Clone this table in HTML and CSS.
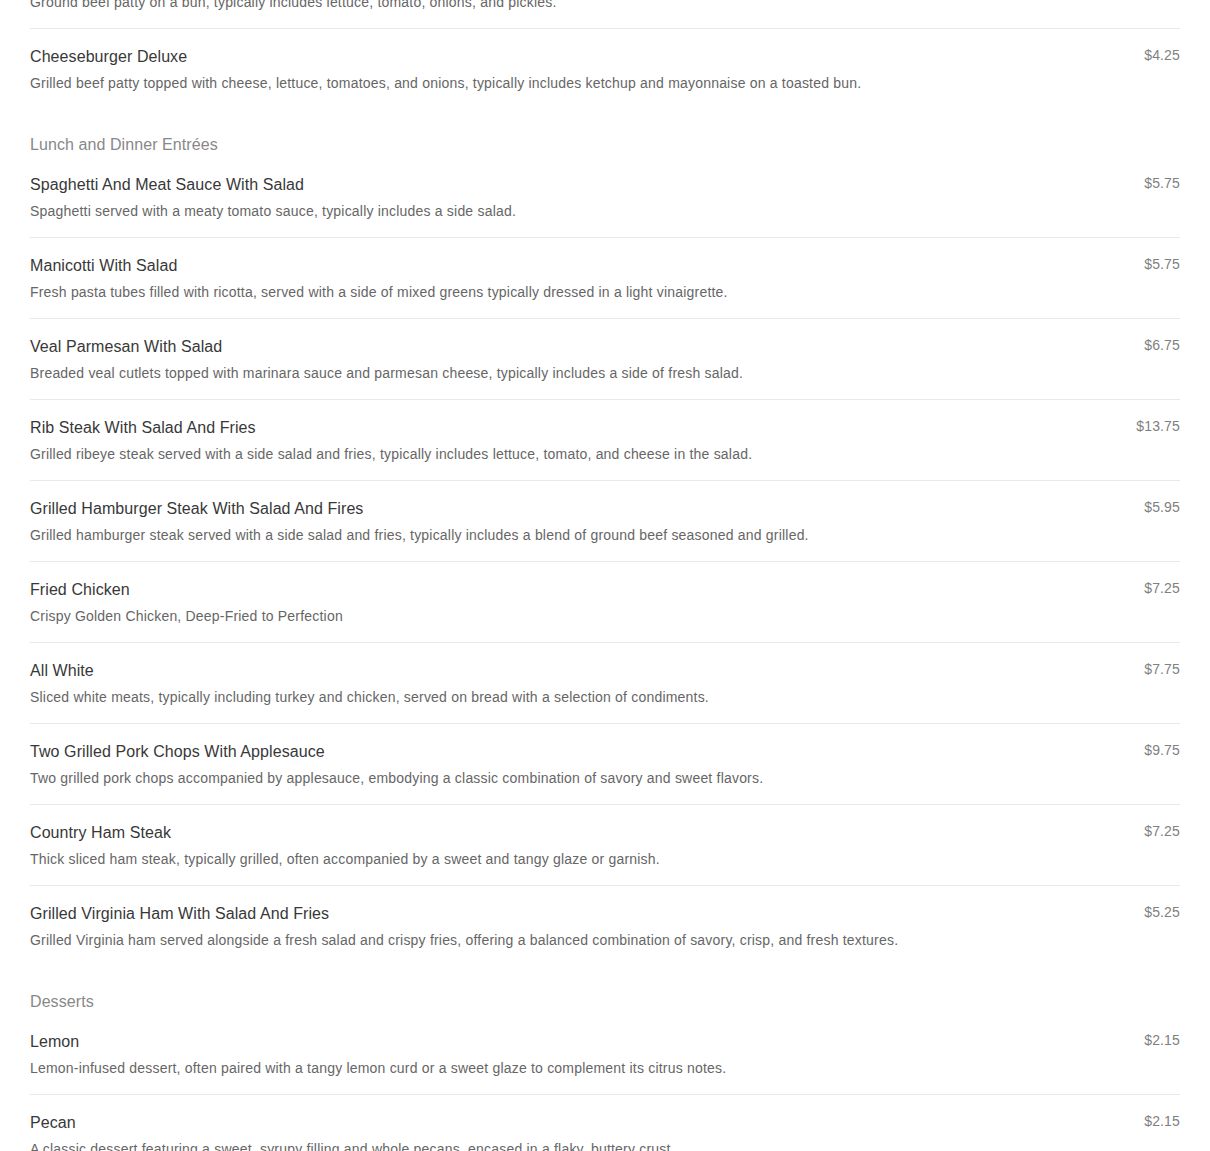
FILE: index.html
```html
<!DOCTYPE html>
<html lang="en">
<head>
<meta charset="utf-8">
<title>Menu</title>
<link rel="stylesheet" href="styles.css">
</head>
<body>
<main class="menu">
  <section class="section section-first">
    <div class="item">
      <div class="item-text">
        <div class="item-name">Hamburger Deluxe</div>
        <div class="item-desc">Ground beef patty on a bun, typically includes lettuce, tomato, onions, and pickles.</div>
      </div>
      <div class="item-price">$3.75</div>
    </div>
    <div class="item">
      <div class="item-text">
        <div class="item-name">Cheeseburger Deluxe</div>
        <div class="item-desc">Grilled beef patty topped with cheese, lettuce, tomatoes, and onions, typically includes ketchup and mayonnaise on a toasted bun.</div>
      </div>
      <div class="item-price">$4.25</div>
    </div>
  </section>

  <section class="section">
    <h2 class="section-title">Lunch and Dinner Entrées</h2>
    <div class="item">
      <div class="item-text">
        <div class="item-name">Spaghetti And Meat Sauce With Salad</div>
        <div class="item-desc">Spaghetti served with a meaty tomato sauce, typically includes a side salad.</div>
      </div>
      <div class="item-price">$5.75</div>
    </div>
    <div class="item">
      <div class="item-text">
        <div class="item-name">Manicotti With Salad</div>
        <div class="item-desc">Fresh pasta tubes filled with ricotta, served with a side of mixed greens typically dressed in a light vinaigrette.</div>
      </div>
      <div class="item-price">$5.75</div>
    </div>
    <div class="item">
      <div class="item-text">
        <div class="item-name">Veal Parmesan With Salad</div>
        <div class="item-desc">Breaded veal cutlets topped with marinara sauce and parmesan cheese, typically includes a side of fresh salad.</div>
      </div>
      <div class="item-price">$6.75</div>
    </div>
    <div class="item">
      <div class="item-text">
        <div class="item-name">Rib Steak With Salad And Fries</div>
        <div class="item-desc">Grilled ribeye steak served with a side salad and fries, typically includes lettuce, tomato, and cheese in the salad.</div>
      </div>
      <div class="item-price">$13.75</div>
    </div>
    <div class="item">
      <div class="item-text">
        <div class="item-name">Grilled Hamburger Steak With Salad And Fires</div>
        <div class="item-desc">Grilled hamburger steak served with a side salad and fries, typically includes a blend of ground beef seasoned and grilled.</div>
      </div>
      <div class="item-price">$5.95</div>
    </div>
    <div class="item">
      <div class="item-text">
        <div class="item-name">Fried Chicken</div>
        <div class="item-desc">Crispy Golden Chicken, Deep-Fried to Perfection</div>
      </div>
      <div class="item-price">$7.25</div>
    </div>
    <div class="item">
      <div class="item-text">
        <div class="item-name">All White</div>
        <div class="item-desc">Sliced white meats, typically including turkey and chicken, served on bread with a selection of condiments.</div>
      </div>
      <div class="item-price">$7.75</div>
    </div>
    <div class="item">
      <div class="item-text">
        <div class="item-name">Two Grilled Pork Chops With Applesauce</div>
        <div class="item-desc">Two grilled pork chops accompanied by applesauce, embodying a classic combination of savory and sweet flavors.</div>
      </div>
      <div class="item-price">$9.75</div>
    </div>
    <div class="item">
      <div class="item-text">
        <div class="item-name">Country Ham Steak</div>
        <div class="item-desc">Thick sliced ham steak, typically grilled, often accompanied by a sweet and tangy glaze or garnish.</div>
      </div>
      <div class="item-price">$7.25</div>
    </div>
    <div class="item">
      <div class="item-text">
        <div class="item-name">Grilled Virginia Ham With Salad And Fries</div>
        <div class="item-desc">Grilled Virginia ham served alongside a fresh salad and crispy fries, offering a balanced combination of savory, crisp, and fresh textures.</div>
      </div>
      <div class="item-price">$5.25</div>
    </div>
  </section>

  <section class="section">
    <h2 class="section-title">Desserts</h2>
    <div class="item">
      <div class="item-text">
        <div class="item-name">Lemon</div>
        <div class="item-desc">Lemon-infused dessert, often paired with a tangy lemon curd or a sweet glaze to complement its citrus notes.</div>
      </div>
      <div class="item-price">$2.15</div>
    </div>
    <div class="item">
      <div class="item-text">
        <div class="item-name">Pecan</div>
        <div class="item-desc">A classic dessert featuring a sweet, syrupy filling and whole pecans, encased in a flaky, buttery crust.</div>
      </div>
      <div class="item-price">$2.15</div>
    </div>
  </section>
</main>
</body>
</html>
```

FILE: styles.css
```css
html, body {
  margin: 0;
  padding: 0;
  background: #ffffff;
}

body {
  font-family: "Liberation Sans", Arial, Helvetica, sans-serif;
  color: #333333;
  overflow: hidden;
}

.menu {
  padding: 0 30px;
  margin-top: -52px;
}

.section {
  display: flex;
  flex-direction: column;
  margin-top: 26px;
}

.section-first {
  margin-top: 0;
}

.section-title {
  margin: 0 0 2px 0;
  font-size: 16px;
  line-height: 20px;
  font-weight: normal;
  color: #888888;
  letter-spacing: 0.08px;
}

.item {
  display: flex;
  justify-content: space-between;
  align-items: flex-start;
  gap: 20px;
  padding: 17px 0 16px 0;
  border-bottom: 1px solid #e9e9e9;
}

.item:last-child {
  border-bottom: none;
}

.item-text {
  display: flex;
  flex-direction: column;
  gap: 6px;
  padding-top: 1px;
}

.item-name {
  font-size: 16px;
  line-height: 20px;
  color: #383838;
  letter-spacing: 0.08px;
}

.item-desc {
  font-size: 14px;
  line-height: 20px;
  color: #666666;
  letter-spacing: 0.2px;
}

.item-price {
  font-size: 14px;
  line-height: 18px;
  color: #808080;
  letter-spacing: 0.15px;
  white-space: nowrap;
}
```
